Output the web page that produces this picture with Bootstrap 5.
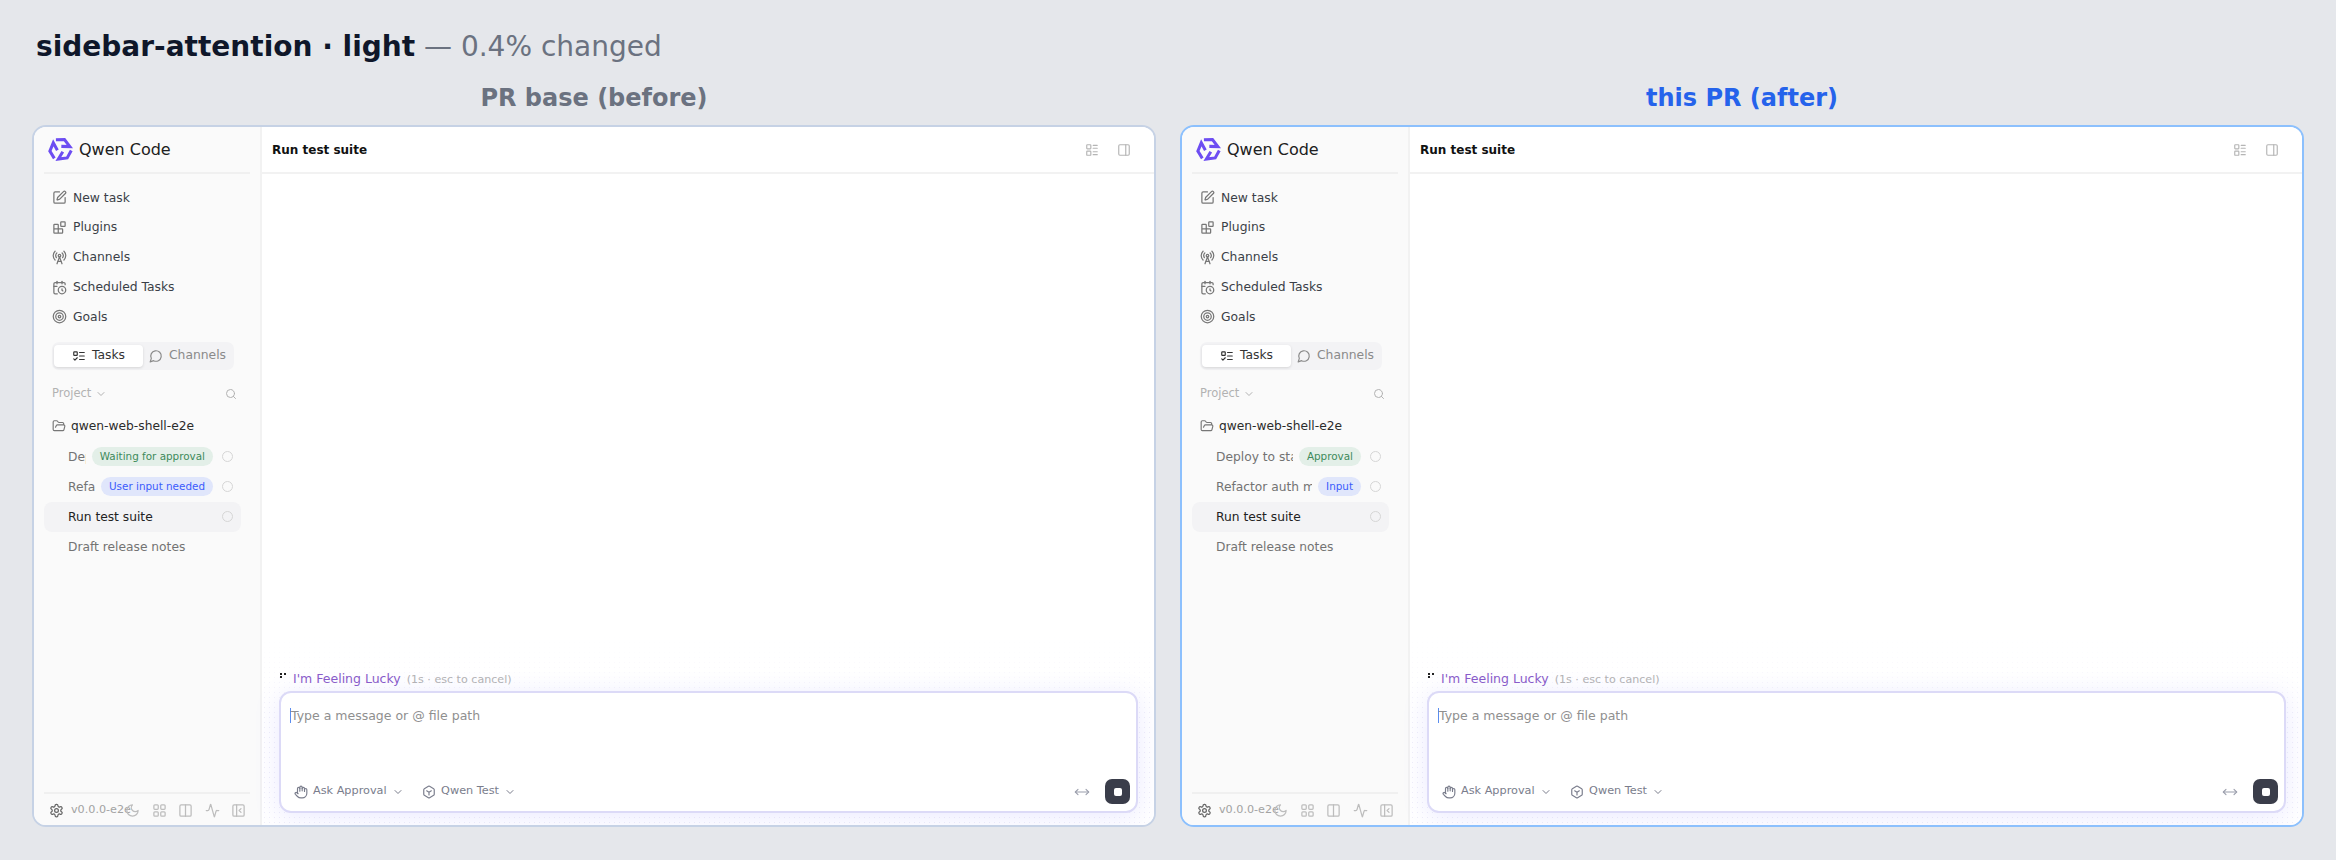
<!doctype html>
<html lang="en">
<head>
<meta charset="utf-8">
<title>sidebar-attention</title>
<link href="https://cdn.jsdelivr.net/npm/bootstrap@5.3.0/dist/css/bootstrap.min.css" rel="stylesheet">
<style>
html,body{height:100%;overflow:hidden}
body{background:#e5e7eb;font-family:"DejaVu Sans",sans-serif;padding:0 32px 33px;color:#1f1f1f}
.ttl{font-size:28px;line-height:36px;margin:29px 0 0 4px;font-weight:400;color:#6b7280}
.ttl b{color:#0f172a;font-weight:700}
.cols{height:755px;margin-top:17px}
.col-f{flex:1 1 0;min-width:0}
.lbl{font-size:24px;line-height:32px;font-weight:700;color:#6b7280;text-align:center;height:32px;margin-bottom:11px}
.lbl.blue{color:#2563eb}
.frame{height:702px;background:#fff;border:2px solid #c6d2e5;border-radius:14px;overflow:hidden}
.frame.blue{border-color:#8cc0fd}
.side{width:228px;flex:none;background:#fafafa;border-right:2px solid #f2f2f2;padding:0 10px}
.brand{height:47px;border-bottom:2px solid #f0f0f0;gap:6px;padding-left:4px}
.brand span{font-size:16px;color:#202020}
.nav-i{height:29.75px;padding-left:8px;gap:6px;font-size:12.35px;color:#3a3f47}
.nav-i svg{width:15px;height:15px;color:#777}
.nav-w{padding-top:9px}
.tabs{height:28px;margin:10px 6px 0 8px;width:182px;background:#f3f3f5;border-radius:7px;padding:3px 2px}
.tab{flex:1 1 0;font-size:12.35px;color:#8a8a8a;gap:6px;border-radius:4px}
.tab svg{width:14px;height:14px}
.tab.on{background:#fff;color:#333;box-shadow:0 1px 3px rgba(0,0,0,.13)}
.proj{height:24px;margin-top:12px;padding:0 13px 0 8px;color:#b2b2b2;font-size:11.5px}
.proj svg{width:12px;height:12px}
.fold{height:30px;margin-top:5px;margin-bottom:1px;padding-left:8px;gap:5px;font-size:12.25px;color:#2b2b2b}
.fold svg{width:14px;height:14px;color:#777}
.tr{height:30px;padding:0 8px 0 24px;font-size:12.25px;color:#737373;border-radius:8px;gap:6px;margin-right:9px}
.tr.sel{background:#f3f3f5;color:#222}
.tr .nm{flex:1 1 0;min-width:0;overflow:hidden;white-space:nowrap}
.bdg{height:19px;line-height:19px;padding:0 8px;border-radius:10px;font-size:10.4px;white-space:nowrap}
.bdg.g{background:#e3efe8;color:#3d8a5a}
.bdg.u{background:#e0e6fb;color:#3b5bfb}
.spin{width:11px;height:11px;border:1.5px solid #d6d6d6;border-radius:50%;margin-left:3px;flex:none}
.foot{height:33px;border-top:2px solid #f0f0f0;padding:2px 5px 0 5px;color:#a3a3a3;font-size:11.2px}
.foot svg{width:15px;height:15px;color:#bdbdbd;flex:none}
.foot svg.gear{color:#666;margin-right:7px}
.ver{width:56px;white-space:nowrap;flex:none}
.foot .ics{gap:11.6px;margin-left:-2px}
.mhead{height:47px;border-bottom:2px solid #f2f2f2;padding:0 23px 0 10px}
.mhead b{font-size:12px;color:#111}
.mhead svg{width:14px;height:14px;color:#b5b5b5}
.mhead .hicons{gap:18px}
.main{min-width:0;background:#fff;position:relative}
.main::before{content:"";position:absolute;left:0;right:0;bottom:0;height:190px;background-image:radial-gradient(#dcdaf2 .7px,transparent .9px);background-size:5px 5px;-webkit-mask-image:linear-gradient(to top,#000 55%,transparent);mask-image:linear-gradient(to top,#000 55%,transparent);opacity:.45}
.status,.inp{position:relative}
.status{font-size:12.5px;color:#8a5cc9;padding:0 18px;gap:6px;margin-bottom:2px;line-height:18px}
.status small{font-size:11.1px;color:#b4b4b4;margin-left:2px}
.dots{width:7px;height:7px;flex:none;color:#222;margin-top:-6px}
.inp{margin:0 16px 12px 17px;height:122px;background:#fff;border:2px solid #dcdaf7;border-radius:12px;box-shadow:0 4px 26px rgba(99,91,255,.13);padding:12px 6px 7px 9px}
.ph{font-size:12.5px;color:#8f8f8f;line-height:22px}
.caret{display:inline-block;width:1px;height:15px;background:#5b8def;vertical-align:-3px}
.bt{font-size:11.25px;color:#7a7d8c;gap:5px}
.bt svg{width:14px;height:14px}
.bt svg.chev{width:12px;height:12px;margin-left:0}
.btq{margin-left:18.5px}
.stop{width:25px;height:25px;background:#3a3d4a;border-radius:7px;margin-left:15px}
.stop i{display:block;width:8px;height:8px;background:#fff;border-radius:2px}
.arr{width:16px;height:16px;color:#9a9dab}
.sp{flex:1 1 auto;min-height:0}
</style>
</head>
<body>
<svg width="0" height="0" class="d-none">
<defs>
<path id="arm" d="M7.6 2.6 15.8 2.4 21 9.2 12.8 9" fill="none" stroke-width="2.9" stroke-linejoin="miter" stroke-linecap="butt"/>
<symbol id="pen" viewBox="0 0 24 24"><path d="M12 3H5a2 2 0 0 0-2 2v14a2 2 0 0 0 2 2h14a2 2 0 0 0 2-2v-7"/><path d="M18.375 2.625a1 1 0 0 1 3 3l-9.013 9.014a2 2 0 0 1-.853.505l-2.873.84a.5.5 0 0 1-.62-.62l.84-2.873a2 2 0 0 1 .506-.852z"/></symbol>
<symbol id="blocks" viewBox="0 0 24 24"><rect width="7" height="7" x="14" y="3" rx="1"/><path d="M10 21V8a1 1 0 0 0-1-1H4a1 1 0 0 0-1 1v12a1 1 0 0 0 1 1h12a1 1 0 0 0 1-1v-5a1 1 0 0 0-1-1H3"/></symbol>
<symbol id="tower" viewBox="0 0 24 24"><path d="M4.9 16.1C1 12.2 1 5.8 4.9 1.9"/><path d="M7.8 4.7a6.14 6.14 0 0 0-.8 7.5"/><circle cx="12" cy="9" r="2"/><path d="M16.2 4.8c2 2 2.26 5.11.8 7.47"/><path d="M19.1 1.9a9.96 9.96 0 0 1 0 14.1"/><path d="M9.5 18h5"/><path d="m8 22 4-11 4 11"/></symbol>
<symbol id="cal" viewBox="0 0 24 24"><path d="M21 7.5V6a2 2 0 0 0-2-2H5a2 2 0 0 0-2 2v14a2 2 0 0 0 2 2h3.5"/><path d="M16 2v4"/><path d="M8 2v4"/><path d="M3 10h5"/><path d="M17.5 17.5 16 16.3V14"/><circle cx="16" cy="16" r="6"/></symbol>
<symbol id="target" viewBox="0 0 24 24"><circle cx="12" cy="12" r="10"/><circle cx="12" cy="12" r="6"/><circle cx="12" cy="12" r="2"/></symbol>
<symbol id="todo" viewBox="0 0 24 24"><rect x="3" y="5" width="6" height="6" rx="1"/><path d="m3 17 2 2 4-4"/><path d="M13 6h8"/><path d="M13 12h8"/><path d="M13 18h8"/></symbol>
<symbol id="msg" viewBox="0 0 24 24"><path d="M7.9 20A9 9 0 1 0 4 16.1L2 22Z"/></symbol>
<symbol id="search" viewBox="0 0 24 24"><circle cx="11" cy="11" r="8"/><path d="m21 21-4.3-4.3"/></symbol>
<symbol id="chev" viewBox="0 0 24 24"><path d="m6 9 6 6 6-6"/></symbol>
<symbol id="folder" viewBox="0 0 24 24"><path d="m6 14 1.5-2.9A2 2 0 0 1 9.24 10H20a2 2 0 0 1 1.94 2.5l-1.54 6a2 2 0 0 1-1.95 1.5H4a2 2 0 0 1-2-2V5a2 2 0 0 1 2-2h3.9a2 2 0 0 1 1.69.9l.81 1.2a2 2 0 0 0 1.67.9H18a2 2 0 0 1 2 2v2"/></symbol>
<symbol id="gear" viewBox="0 0 24 24"><path d="M12.22 2h-.44a2 2 0 0 0-2 2v.18a2 2 0 0 1-1 1.73l-.43.25a2 2 0 0 1-2 0l-.15-.08a2 2 0 0 0-2.73.73l-.22.38a2 2 0 0 0 .73 2.73l.15.1a2 2 0 0 1 1 1.72v.51a2 2 0 0 1-1 1.74l-.15.09a2 2 0 0 0-.73 2.73l.22.38a2 2 0 0 0 2.73.73l.15-.08a2 2 0 0 1 2 0l.43.25a2 2 0 0 1 1 1.73V20a2 2 0 0 0 2 2h.44a2 2 0 0 0 2-2v-.18a2 2 0 0 1 1-1.73l.43-.25a2 2 0 0 1 2 0l.15.08a2 2 0 0 0 2.73-.73l.22-.39a2 2 0 0 0-.73-2.73l-.15-.08a2 2 0 0 1-1-1.74v-.5a2 2 0 0 1 1-1.74l.15-.09a2 2 0 0 0 .73-2.73l-.22-.38a2 2 0 0 0-2.73-.73l-.15.08a2 2 0 0 1-2 0l-.43-.25a2 2 0 0 1-1-1.73V4a2 2 0 0 0-2-2z"/><circle cx="12" cy="12" r="3"/></symbol>
<symbol id="moon" viewBox="0 0 24 24"><path d="M12 3a6 6 0 0 0 9 9 9 9 0 1 1-9-9Z"/></symbol>
<symbol id="grid" viewBox="0 0 24 24"><rect width="7" height="7" x="3" y="3" rx="1.5"/><rect width="7" height="7" x="14" y="3" rx="1.5"/><rect width="7" height="7" x="14" y="14" rx="1.5"/><rect width="7" height="7" x="3" y="14" rx="1.5"/></symbol>
<symbol id="cols" viewBox="0 0 24 24"><rect width="18" height="18" x="3" y="3" rx="2"/><path d="M12 3v18"/></symbol>
<symbol id="pulse" viewBox="0 0 24 24"><path d="M22 12h-2.48a2 2 0 0 0-1.93 1.46l-2.35 8.36a.25.25 0 0 1-.48 0L9.24 2.18a.25.25 0 0 0-.48 0l-2.35 8.36A2 2 0 0 1 4.49 12H2"/></symbol>
<symbol id="plc" viewBox="0 0 24 24"><rect width="18" height="18" x="3" y="3" rx="2"/><path d="M9 3v18"/><path d="m16 15-3-3 3-3"/></symbol>
<symbol id="prt" viewBox="0 0 24 24"><rect width="18" height="18" x="3" y="3" rx="2"/><path d="M15 3v18"/></symbol>
<symbol id="lst" viewBox="0 0 24 24"><rect x="3" y="3" width="7" height="7" rx="1"/><rect x="3" y="14" width="7" height="7" rx="1"/><path d="M14 4h7M14 9h7M14 15h7M14 20h7"/></symbol>
<symbol id="hand" viewBox="0 0 24 24"><path d="M18 11V6a2 2 0 0 0-2-2a2 2 0 0 0-2 2"/><path d="M14 10V4a2 2 0 0 0-2-2a2 2 0 0 0-2 2v2"/><path d="M10 10.5V6a2 2 0 0 0-2-2a2 2 0 0 0-2 2v8"/><path d="M18 8a2 2 0 1 1 4 0v6a8 8 0 0 1-8 8h-2c-2.8 0-4.5-.86-5.99-2.34l-3.6-3.6a2 2 0 0 1 2.83-2.82L7 15"/></symbol>
<symbol id="hex" viewBox="0 0 24 24"><path d="M21 16V8a2 2 0 0 0-1-1.73l-7-4a2 2 0 0 0-2 0l-7 4A2 2 0 0 0 3 8v8a2 2 0 0 0 1 1.73l7 4a2 2 0 0 0 2 0l7-4A2 2 0 0 0 21 16z"/><path d="m8 10 4 2.5 4-2.5M12 12.5V17"/></symbol>
<symbol id="move" viewBox="0 0 24 24"><path d="m18 8 4 4-4 4"/><path d="M2 12h20"/><path d="m6 8-4 4 4 4"/></symbol>
</defs>
</svg>
<h1 class="ttl"><b>sidebar-attention · light</b> — 0.4% changed</h1>
<div class="cols d-flex gap-4">

<div class="col-f">
<div class="lbl">PR base (before)</div>
<div class="frame d-flex">
<aside class="side d-flex flex-column">
<div class="brand d-flex align-items-center"><svg width="25" height="25" viewBox="0 0 24 24" stroke="#6d4df2"><use href="#arm"/><use href="#arm" transform="rotate(120 12 12)"/><use href="#arm" transform="rotate(240 12 12)"/></svg><span>Qwen Code</span></div>
<div class="nav-w">
<div class="nav-i d-flex align-items-center"><svg fill="none" stroke="currentColor" stroke-width="2" stroke-linecap="round" stroke-linejoin="round"><use href="#pen"/></svg>New task</div>
<div class="nav-i d-flex align-items-center"><svg fill="none" stroke="currentColor" stroke-width="2" stroke-linecap="round" stroke-linejoin="round"><use href="#blocks"/></svg>Plugins</div>
<div class="nav-i d-flex align-items-center"><svg fill="none" stroke="currentColor" stroke-width="2" stroke-linecap="round" stroke-linejoin="round"><use href="#tower"/></svg>Channels</div>
<div class="nav-i d-flex align-items-center"><svg fill="none" stroke="currentColor" stroke-width="2" stroke-linecap="round" stroke-linejoin="round"><use href="#cal"/></svg>Scheduled Tasks</div>
<div class="nav-i d-flex align-items-center"><svg fill="none" stroke="currentColor" stroke-width="2" stroke-linecap="round" stroke-linejoin="round"><use href="#target"/></svg>Goals</div>
</div>
<div class="tabs d-flex">
<div class="tab on d-flex align-items-center justify-content-center"><svg fill="none" stroke="currentColor" stroke-width="2" stroke-linecap="round" stroke-linejoin="round"><use href="#todo"/></svg>Tasks</div>
<div class="tab d-flex align-items-center justify-content-center"><svg fill="none" stroke="currentColor" stroke-width="2" stroke-linecap="round" stroke-linejoin="round"><use href="#msg"/></svg>Channels</div>
</div>
<div class="proj d-flex align-items-center justify-content-between"><span class="d-flex align-items-center gap-1">Project <svg fill="none" stroke="currentColor" stroke-width="2" stroke-linecap="round" stroke-linejoin="round"><use href="#chev"/></svg></span><svg fill="none" stroke="currentColor" stroke-width="2" stroke-linecap="round" stroke-linejoin="round"><use href="#search"/></svg></div>
<div class="fold d-flex align-items-center"><svg fill="none" stroke="currentColor" stroke-width="2" stroke-linecap="round" stroke-linejoin="round"><use href="#folder"/></svg>qwen-web-shell-e2e</div>
<div class="tr d-flex align-items-center"><span class="nm">Deploy to staging</span><span class="bdg g">Waiting for approval</span><i class="spin"></i></div>
<div class="tr d-flex align-items-center"><span class="nm">Refactor auth module</span><span class="bdg u">User input needed</span><i class="spin"></i></div>
<div class="tr sel d-flex align-items-center"><span class="nm">Run test suite</span><i class="spin"></i></div>
<div class="tr d-flex align-items-center"><span class="nm">Draft release notes</span></div>
<div class="sp"></div>
<div class="foot d-flex align-items-center"><svg class="gear" fill="none" stroke="currentColor" stroke-width="2" stroke-linecap="round" stroke-linejoin="round"><use href="#gear"/></svg><span class="ver">v0.0.0-e2e</span><div class="ics d-flex align-items-center"><svg fill="none" stroke="currentColor" stroke-width="2" stroke-linecap="round" stroke-linejoin="round"><use href="#moon"/></svg><svg fill="none" stroke="currentColor" stroke-width="2" stroke-linecap="round" stroke-linejoin="round"><use href="#grid"/></svg><svg fill="none" stroke="currentColor" stroke-width="2" stroke-linecap="round" stroke-linejoin="round"><use href="#cols"/></svg><svg fill="none" stroke="currentColor" stroke-width="2" stroke-linecap="round" stroke-linejoin="round"><use href="#pulse"/></svg><svg fill="none" stroke="currentColor" stroke-width="2" stroke-linecap="round" stroke-linejoin="round"><use href="#plc"/></svg></div></div>
</aside>
<main class="main flex-grow-1 d-flex flex-column">
<div class="mhead d-flex align-items-center justify-content-between"><b>Run test suite</b><div class="d-flex hicons"><svg fill="none" stroke="currentColor" stroke-width="2" stroke-linecap="round" stroke-linejoin="round"><use href="#lst"/></svg><svg fill="none" stroke="currentColor" stroke-width="2" stroke-linecap="round" stroke-linejoin="round"><use href="#prt"/></svg></div></div>
<div class="sp"></div>
<div class="status d-flex align-items-center"><svg class="dots" viewBox="0 0 7 7" fill="currentColor"><rect width="2" height="2"/><rect x="4" width="2" height="2"/><rect y="3" width="2" height="2"/></svg><span>I'm Feeling Lucky <small>(1s · esc to cancel)</small></span></div>
<div class="inp d-flex flex-column justify-content-between">
<div class="ph"><span class="caret"></span>Type a message or @ file path</div>
<div class="d-flex align-items-center">
<div class="bt d-flex align-items-center ms-1"><svg fill="none" stroke="currentColor" stroke-width="2" stroke-linecap="round" stroke-linejoin="round"><use href="#hand"/></svg>Ask Approval<svg class="chev" fill="none" stroke="currentColor" stroke-width="2" stroke-linecap="round" stroke-linejoin="round"><use href="#chev"/></svg></div>
<div class="bt btq d-flex align-items-center"><svg fill="none" stroke="currentColor" stroke-width="2" stroke-linecap="round" stroke-linejoin="round"><use href="#hex"/></svg>Qwen Test<svg class="chev" fill="none" stroke="currentColor" stroke-width="2" stroke-linecap="round" stroke-linejoin="round"><use href="#chev"/></svg></div>
<svg class="arr ms-auto" fill="none" stroke="currentColor" stroke-width="1.6" stroke-linecap="round" stroke-linejoin="round"><use href="#move"/></svg>
<div class="stop d-flex align-items-center justify-content-center"><i></i></div>
</div>
</div>
</main>
</div>
</div>

<div class="col-f">
<div class="lbl blue">this PR (after)</div>
<div class="frame blue d-flex">
<aside class="side d-flex flex-column">
<div class="brand d-flex align-items-center"><svg width="25" height="25" viewBox="0 0 24 24" stroke="#6d4df2"><use href="#arm"/><use href="#arm" transform="rotate(120 12 12)"/><use href="#arm" transform="rotate(240 12 12)"/></svg><span>Qwen Code</span></div>
<div class="nav-w">
<div class="nav-i d-flex align-items-center"><svg fill="none" stroke="currentColor" stroke-width="2" stroke-linecap="round" stroke-linejoin="round"><use href="#pen"/></svg>New task</div>
<div class="nav-i d-flex align-items-center"><svg fill="none" stroke="currentColor" stroke-width="2" stroke-linecap="round" stroke-linejoin="round"><use href="#blocks"/></svg>Plugins</div>
<div class="nav-i d-flex align-items-center"><svg fill="none" stroke="currentColor" stroke-width="2" stroke-linecap="round" stroke-linejoin="round"><use href="#tower"/></svg>Channels</div>
<div class="nav-i d-flex align-items-center"><svg fill="none" stroke="currentColor" stroke-width="2" stroke-linecap="round" stroke-linejoin="round"><use href="#cal"/></svg>Scheduled Tasks</div>
<div class="nav-i d-flex align-items-center"><svg fill="none" stroke="currentColor" stroke-width="2" stroke-linecap="round" stroke-linejoin="round"><use href="#target"/></svg>Goals</div>
</div>
<div class="tabs d-flex">
<div class="tab on d-flex align-items-center justify-content-center"><svg fill="none" stroke="currentColor" stroke-width="2" stroke-linecap="round" stroke-linejoin="round"><use href="#todo"/></svg>Tasks</div>
<div class="tab d-flex align-items-center justify-content-center"><svg fill="none" stroke="currentColor" stroke-width="2" stroke-linecap="round" stroke-linejoin="round"><use href="#msg"/></svg>Channels</div>
</div>
<div class="proj d-flex align-items-center justify-content-between"><span class="d-flex align-items-center gap-1">Project <svg fill="none" stroke="currentColor" stroke-width="2" stroke-linecap="round" stroke-linejoin="round"><use href="#chev"/></svg></span><svg fill="none" stroke="currentColor" stroke-width="2" stroke-linecap="round" stroke-linejoin="round"><use href="#search"/></svg></div>
<div class="fold d-flex align-items-center"><svg fill="none" stroke="currentColor" stroke-width="2" stroke-linecap="round" stroke-linejoin="round"><use href="#folder"/></svg>qwen-web-shell-e2e</div>
<div class="tr d-flex align-items-center"><span class="nm">Deploy to staging</span><span class="bdg g">Approval</span><i class="spin"></i></div>
<div class="tr d-flex align-items-center"><span class="nm">Refactor auth module</span><span class="bdg u">Input</span><i class="spin"></i></div>
<div class="tr sel d-flex align-items-center"><span class="nm">Run test suite</span><i class="spin"></i></div>
<div class="tr d-flex align-items-center"><span class="nm">Draft release notes</span></div>
<div class="sp"></div>
<div class="foot d-flex align-items-center"><svg class="gear" fill="none" stroke="currentColor" stroke-width="2" stroke-linecap="round" stroke-linejoin="round"><use href="#gear"/></svg><span class="ver">v0.0.0-e2e</span><div class="ics d-flex align-items-center"><svg fill="none" stroke="currentColor" stroke-width="2" stroke-linecap="round" stroke-linejoin="round"><use href="#moon"/></svg><svg fill="none" stroke="currentColor" stroke-width="2" stroke-linecap="round" stroke-linejoin="round"><use href="#grid"/></svg><svg fill="none" stroke="currentColor" stroke-width="2" stroke-linecap="round" stroke-linejoin="round"><use href="#cols"/></svg><svg fill="none" stroke="currentColor" stroke-width="2" stroke-linecap="round" stroke-linejoin="round"><use href="#pulse"/></svg><svg fill="none" stroke="currentColor" stroke-width="2" stroke-linecap="round" stroke-linejoin="round"><use href="#plc"/></svg></div></div>
</aside>
<main class="main flex-grow-1 d-flex flex-column">
<div class="mhead d-flex align-items-center justify-content-between"><b>Run test suite</b><div class="d-flex hicons"><svg fill="none" stroke="currentColor" stroke-width="2" stroke-linecap="round" stroke-linejoin="round"><use href="#lst"/></svg><svg fill="none" stroke="currentColor" stroke-width="2" stroke-linecap="round" stroke-linejoin="round"><use href="#prt"/></svg></div></div>
<div class="sp"></div>
<div class="status d-flex align-items-center"><svg class="dots" viewBox="0 0 7 7" fill="currentColor"><rect width="2" height="2"/><rect x="4" width="2" height="2"/><rect y="3" width="2" height="2"/></svg><span>I'm Feeling Lucky <small>(1s · esc to cancel)</small></span></div>
<div class="inp d-flex flex-column justify-content-between">
<div class="ph"><span class="caret"></span>Type a message or @ file path</div>
<div class="d-flex align-items-center">
<div class="bt d-flex align-items-center ms-1"><svg fill="none" stroke="currentColor" stroke-width="2" stroke-linecap="round" stroke-linejoin="round"><use href="#hand"/></svg>Ask Approval<svg class="chev" fill="none" stroke="currentColor" stroke-width="2" stroke-linecap="round" stroke-linejoin="round"><use href="#chev"/></svg></div>
<div class="bt btq d-flex align-items-center"><svg fill="none" stroke="currentColor" stroke-width="2" stroke-linecap="round" stroke-linejoin="round"><use href="#hex"/></svg>Qwen Test<svg class="chev" fill="none" stroke="currentColor" stroke-width="2" stroke-linecap="round" stroke-linejoin="round"><use href="#chev"/></svg></div>
<svg class="arr ms-auto" fill="none" stroke="currentColor" stroke-width="1.6" stroke-linecap="round" stroke-linejoin="round"><use href="#move"/></svg>
<div class="stop d-flex align-items-center justify-content-center"><i></i></div>
</div>
</div>
</main>
</div>
</div>

</div>
<script src="https://cdn.jsdelivr.net/npm/bootstrap@5.3.0/dist/js/bootstrap.bundle.min.js"></script>
</body>
</html>
